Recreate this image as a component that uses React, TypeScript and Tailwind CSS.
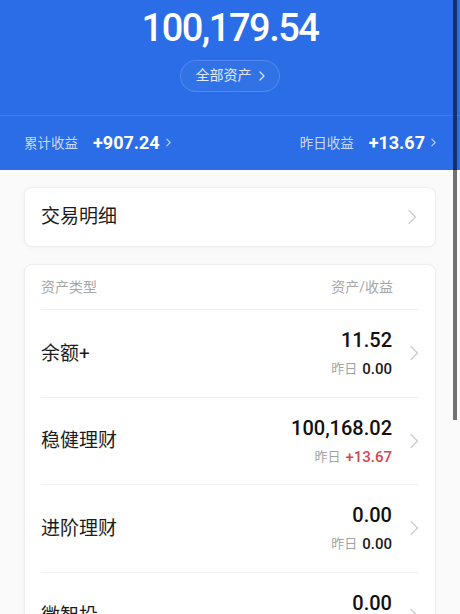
import React from "react";

const cjk = { fontFamily: "Roboto, 'Noto Sans CJK SC', sans-serif" };

const Chevron = ({ className = "" }: { className?: string }) => (
  <svg viewBox="0 0 9 16" className={className} fill="none">
    <path d="M1 1.5l6.5 6.5L1 14.5" stroke="currentColor" strokeWidth="1.4" strokeLinecap="round" strokeLinejoin="round" />
  </svg>
);

const SmallChevron = ({ className = "" }: { className?: string }) => (
  <svg viewBox="0 0 6 10" className={className} fill="none">
    <path d="M1 1l4 4-4 4" stroke="currentColor" strokeWidth="1.3" strokeLinecap="round" strokeLinejoin="round" />
  </svg>
);

interface Asset {
  name: string;
  amount: string;
  yesterday: string;
  up?: boolean;
}

const assets: Asset[] = [
  { name: "余额+", amount: "11.52", yesterday: "0.00" },
  { name: "稳健理财", amount: "100,168.02", yesterday: "+13.67", up: true },
  { name: "进阶理财", amount: "0.00", yesterday: "0.00" },
  { name: "微智投", amount: "0.00", yesterday: "0.00" },
];

const AssetRow = ({ asset }: { asset: Asset }) => (
  <div className="flex h-[87.5px] items-center border-t border-[#efefef]">
    <div className="flex-1 text-[19px] leading-none text-[#1c1c1c]">{asset.name}</div>
    <div className="flex flex-col items-end gap-[6px]">
      <div className="text-[20px] font-medium leading-[26px] text-[#111]">{asset.amount}</div>
      <div className="flex items-center gap-[5px] leading-[20px]">
        <span className="text-[13px] text-[#a3a3a3]">昨日</span>
        <span className={`text-[15px] font-medium ${asset.up ? "text-[#d4464f]" : "text-[#1a1a1a]"}`}>
          {asset.yesterday}
        </span>
      </div>
    </div>
    <Chevron className="ml-[18px] h-[16px] w-[9px] text-[#cccccc]" />
  </div>
);

export default function App() {
  return (
    <div className="relative h-[614px] w-[460px] overflow-hidden bg-[#fafafa]" style={cjk}>
      <div className="flex h-[170px] flex-col items-center bg-[#2a6de6] pt-[9px] text-white">
        <div className="text-[38px] font-medium leading-none tracking-[-1.5px]">100,179.54</div>
        <div className="mt-[13px] flex h-[32px] w-[100px] items-center justify-center gap-[7px] rounded-full border border-white/15 bg-white/[0.04] text-[14px] text-white/85">
          全部资产
          <SmallChevron className="h-[10px] w-[6px] text-white/80" />
        </div>
        <div className="mt-[23px] w-full border-t border-white/10" />
        <div className="flex h-[55px] w-full items-center justify-between pl-[24px] pr-[24px]">
          <div className="flex items-center">
            <span className="text-[13.5px] text-white/75">累计收益</span>
            <span className="ml-[15px] text-[18px] font-bold">+907.24</span>
            <SmallChevron className="ml-[6px] h-[9px] w-[5px] text-white/70" />
          </div>
          <div className="flex items-center">
            <span className="text-[13.5px] text-white/75">昨日收益</span>
            <span className="ml-[15px] text-[18px] font-bold">+13.67</span>
            <SmallChevron className="ml-[6px] h-[9px] w-[5px] text-white/70" />
          </div>
        </div>
      </div>

      <div className="px-[24px] pt-[17px]">
        <div className="flex h-[60px] items-center rounded-[8px] border border-[#efefef] bg-white pl-[16px] pr-[18px] shadow-[0_1px_4px_rgba(0,0,0,0.04)]">
          <span className="flex-1 text-[19px] text-[#1c1c1c]">交易明细</span>
          <Chevron className="h-[16px] w-[9px] text-[#cccccc]" />
        </div>

        <div className="mt-[17px] rounded-[8px] border border-[#efefef] bg-white px-[16px] shadow-[0_1px_4px_rgba(0,0,0,0.04)]">
          <div className="flex h-[44px] items-center justify-between pr-[26px] text-[14px] text-[#a6a6a6]">
            <span>资产类型</span>
            <span>资产/收益</span>
          </div>
          {assets.map((a) => (
            <AssetRow key={a.name} asset={a} />
          ))}
        </div>
      </div>

      <div className="absolute right-[3px] top-0 h-[420px] w-[4px] bg-black/55" />
    </div>
  );
}
